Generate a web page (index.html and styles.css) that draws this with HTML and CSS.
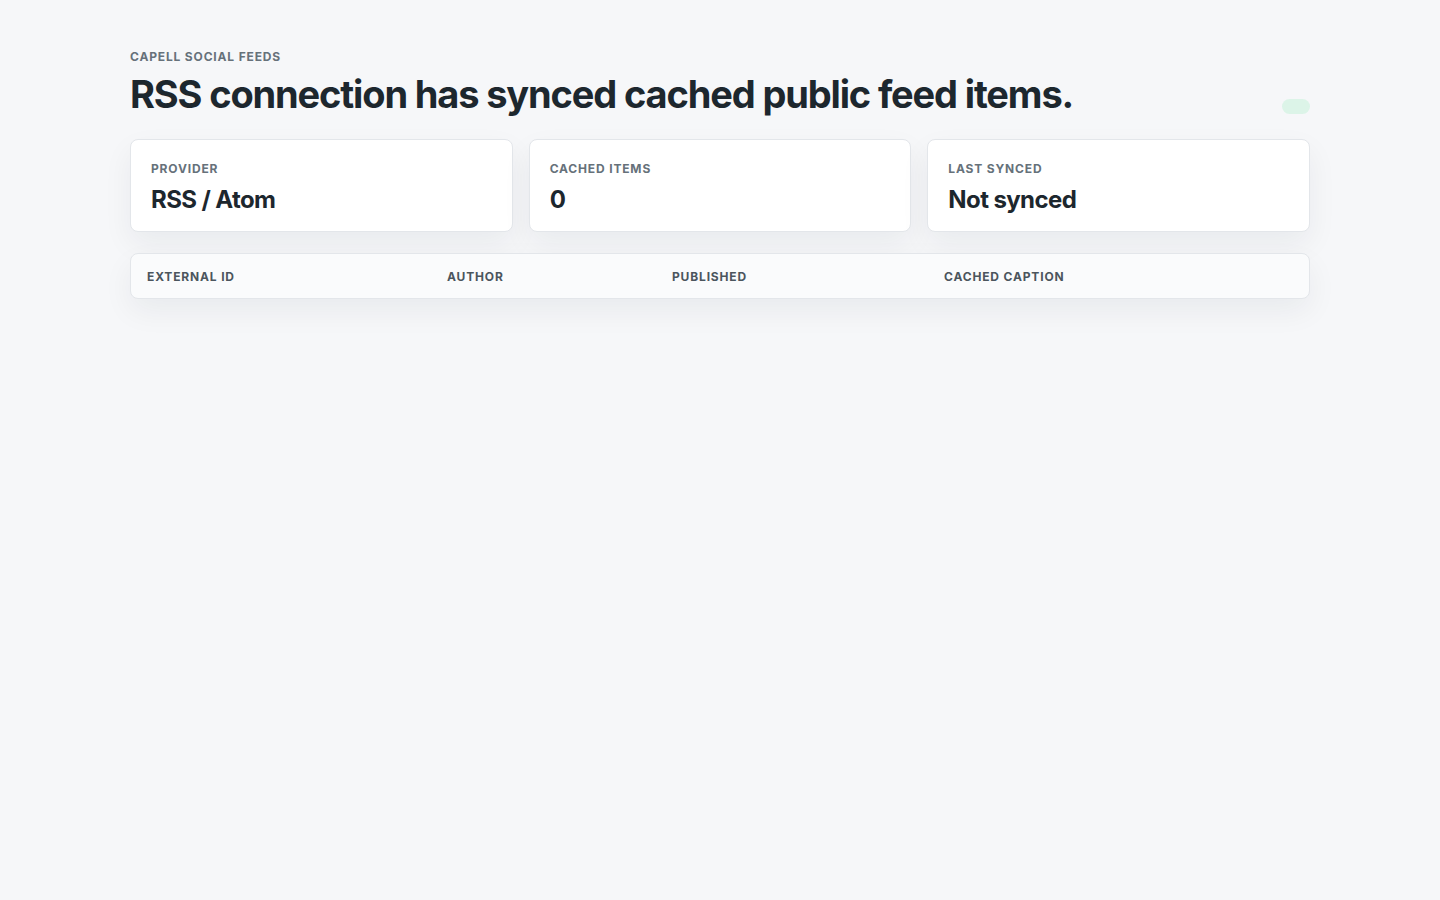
FILE: index.html
```html
<!DOCTYPE html>
<html lang="en">
<head>
<meta charset="utf-8">
<title>Capell Social Feeds</title>
<link rel="stylesheet" href="styles.css">
</head>
<body>
<main class="page">
  <header class="page-header">
    <div class="heading">
      <p class="eyebrow">Capell Social Feeds</p>
      <h1 class="title">RSS connection has synced cached public feed items.</h1>
    </div>
    <span class="status-pill"></span>
  </header>
  <section class="stats">
    <div class="stat-card">
      <p class="stat-label">Provider</p>
      <p class="stat-value">RSS / Atom</p>
    </div>
    <div class="stat-card">
      <p class="stat-label">Cached items</p>
      <p class="stat-value">0</p>
    </div>
    <div class="stat-card">
      <p class="stat-label">Last synced</p>
      <p class="stat-value">Not synced</p>
    </div>
  </section>
  <section class="table-card">
    <table class="feed-table">
      <thead>
        <tr>
          <th class="col-id">External ID</th>
          <th class="col-author">Author</th>
          <th class="col-published">Published</th>
          <th class="col-caption">Cached caption</th>
        </tr>
      </thead>
      <tbody></tbody>
    </table>
  </section>
</main>
</body>
</html>
```
FILE: styles.css
```css
* { box-sizing: border-box; }
html, body { margin: 0; padding: 0; }
body {
  background: #f6f7f9;
  font-family: Inter, "Noto Sans", "Liberation Sans", sans-serif;
  color: #1d272e;
  min-height: 900px;
}
.page {
  padding: 49px 130px;
  display: flex;
  flex-direction: column;
}
.page-header {
  display: flex;
  justify-content: space-between;
  align-items: flex-end;
}
.eyebrow {
  margin: 0;
  font-size: 12px;
  line-height: 16px;
  font-weight: 700;
  letter-spacing: 0.07em;
  text-transform: uppercase;
  color: #66717a;
}
.title {
  margin: 8px 0 0;
  font-size: 38px;
  line-height: 42px;
  font-weight: 700;
  letter-spacing: -0.03em;
  color: #1d272e;
}
.status-pill {
  display: inline-block;
  width: 28px;
  height: 15px;
  border-radius: 999px;
  background: #dcf4e8;
  margin-bottom: 1px;
}
.stats {
  margin-top: 24px;
  display: grid;
  grid-template-columns: repeat(3, 1fr);
  gap: 16px;
}
.stat-card {
  background: #ffffff;
  border: 1px solid #e3e6ea;
  border-radius: 8px;
  padding: 21px 20px 16px;
  box-shadow: 0 12px 30px rgba(20, 30, 45, 0.06);
}
.stat-label {
  margin: 0;
  font-size: 12px;
  line-height: 16px;
  font-weight: 700;
  letter-spacing: 0.07em;
  text-transform: uppercase;
  color: #66717a;
}
.stat-value {
  margin: 8px 0 0;
  font-size: 24px;
  line-height: 30px;
  font-weight: 700;
  letter-spacing: -0.025em;
  color: #1d272e;
}
.table-card {
  margin-top: 21px;
  background: #fafbfc;
  border: 1px solid #e3e6ea;
  border-radius: 8px;
  box-shadow: 0 12px 30px rgba(20, 30, 45, 0.06);
  overflow: hidden;
}
.feed-table {
  width: 100%;
  border-collapse: collapse;
  table-layout: fixed;
}
.feed-table th {
  text-align: left;
  padding: 15px 16px 14px;
  font-size: 12px;
  line-height: 15px;
  font-weight: 700;
  letter-spacing: 0.07em;
  text-transform: uppercase;
  color: #4b555d;
}
.col-id { width: 300px; }
.col-author { width: 225px; }
.col-published { width: 272px; }
```
